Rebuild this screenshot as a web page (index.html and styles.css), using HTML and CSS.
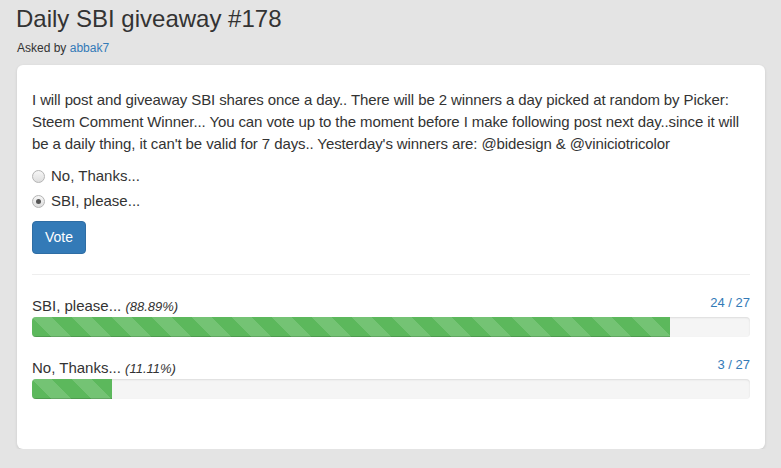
FILE: index.html
```html
<!DOCTYPE html>
<html lang="en">
<head>
    <meta charset="UTF-8">
    <title>Daily SBI giveaway #178</title>
    <link rel="stylesheet" href="styles.css">
</head>
<body>
    <h1 class="poll-title">Daily SBI giveaway #178</h1>
    <p class="asked">Asked by <a href="#">abbak7</a></p>

    <div class="card">
        <p class="question">I will post and giveaway SBI shares once a day.. There will be 2 winners a day picked at random by Picker: Steem Comment Winner... You can vote up to the moment before I make following post next day..since it will be a daily thing, it can't be valid for 7 days.. Yesterday's winners are: @bidesign &amp; @viniciotricolor</p>

        <form class="vote-form">
            <label class="option"><input type="radio" name="answer"> No, Thanks...</label>
            <label class="option"><input type="radio" name="answer" checked> SBI, please...</label>
            <button type="button" class="btn-vote">Vote</button>
        </form>

        <hr>

        <div class="result">
            <div class="result-head">
                <span>SBI, please... <em>(88.89%)</em></span>
                <span class="count">24 / 27</span>
            </div>
            <div class="progress"><div class="bar" style="width: 88.89%"></div></div>
        </div>

        <div class="result">
            <div class="result-head">
                <span>No, Thanks... <em>(11.11%)</em></span>
                <span class="count">3 / 27</span>
            </div>
            <div class="progress"><div class="bar" style="width: 11.11%"></div></div>
        </div>
    </div>
</body>
</html>
```

FILE: styles.css
```css
body {
    font-family: 'Liberation Sans', Arial, sans-serif;
    font-size: 15px;
    line-height: 1.42857;
    color: #333;
    background: #e4e4e4;
    margin: 0;
    padding: 0 16px 0 17px;
}

.poll-title {
    font-size: 24px;
    font-weight: normal;
    line-height: 1.1;
    margin: 6px 0 0 -1px;
}

.asked {
    font-size: 12px;
    line-height: 17px;
    margin: 8px 0 8px;
}

a {
    color: #337ab7;
    text-decoration: none;
}

.card {
    background: #fff;
    border-radius: 6px;
    box-shadow: 0 1px 3px rgba(0, 0, 0, 0.12);
    padding: 24px 15px 29px;
}

.question {
    margin: 0 0 9px;
    line-height: 21.7px;
    letter-spacing: -0.1px;
}

.vote-form {
    display: flex;
    flex-direction: column;
    align-items: flex-start;
}

.option {
    display: flex;
    align-items: center;
    gap: 6px;
    height: 25px;
}

.option input {
    appearance: none;
    -webkit-appearance: none;
    width: 13px;
    height: 13px;
    margin: 0;
    border: 1px solid #b4b4b4;
    border-radius: 50%;
    background: linear-gradient(#f6f6f6, #dedede);
    display: grid;
    place-items: center;
}

.option input:checked::after {
    content: "";
    width: 5px;
    height: 5px;
    border-radius: 50%;
    background: #555;
}

.btn-vote {
    margin-top: 7px;
    padding: 6px 12px;
    font-family: inherit;
    font-size: 14px;
    line-height: 19px;
    color: #fff;
    background: #337ab7;
    border: 1px solid #2e6da4;
    border-radius: 4px;
    cursor: pointer;
}

hr {
    border: 0;
    border-top: 1px solid #eee;
    margin: 20px 0 21px;
}

.result-head {
    display: flex;
    justify-content: space-between;
    line-height: 20px;
}

.result-head em {
    font-size: 13px;
}

.count {
    color: #337ab7;
    font-size: 13px;
    position: relative;
    top: -3px;
}

.progress {
    height: 20px;
    margin-bottom: 21px;
    background: #f5f5f5;
    border-radius: 4px;
    box-shadow: inset 0 1px 2px rgba(0, 0, 0, 0.1);
    overflow: hidden;
}

.bar {
    height: 100%;
    background-color: #5cb85c;
    background-image: linear-gradient(45deg, rgba(255, 255, 255, 0.15) 25%, transparent 25%, transparent 50%, rgba(255, 255, 255, 0.15) 50%, rgba(255, 255, 255, 0.15) 75%, transparent 75%, transparent);
    background-size: 40px 40px;
    box-shadow: inset 0 -1px 0 rgba(0, 0, 0, 0.15);
}
```
